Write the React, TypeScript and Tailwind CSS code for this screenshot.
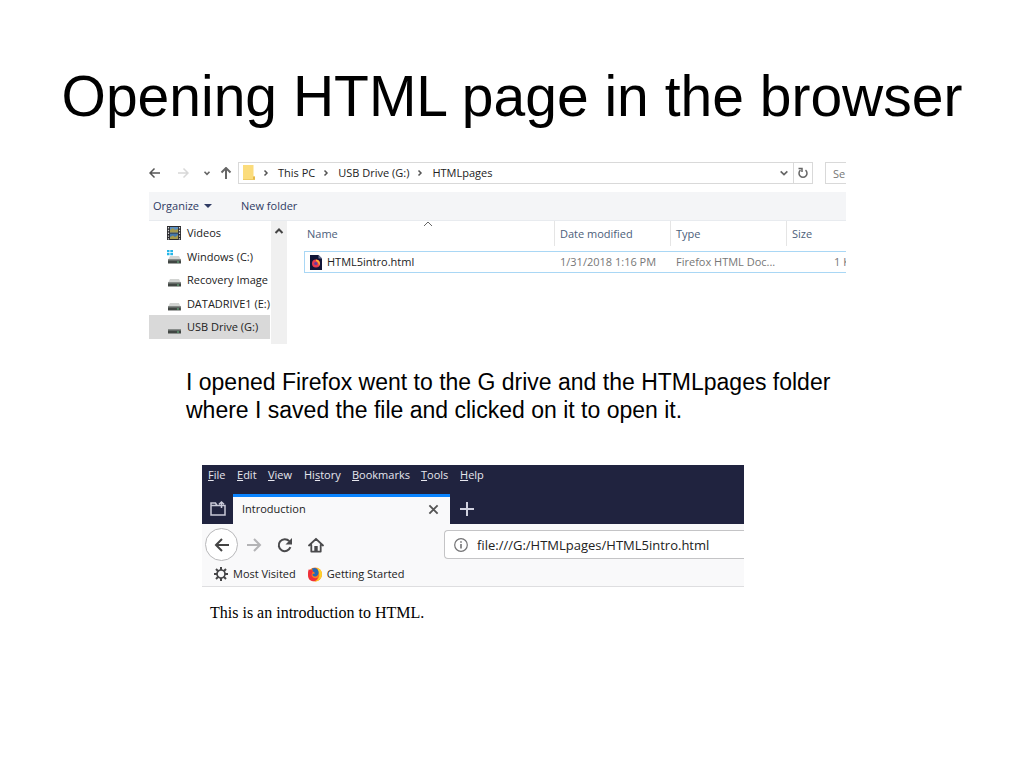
import type { ReactNode } from "react";

/* =========================
   Slide data
========================= */
type DriveKind = "video" | "windows" | "drive" | "usb";

const DRIVES: Array<{ name: string; kind: DriveKind; active?: boolean }> = [
  { name: "Videos", kind: "video" },
  { name: "Windows (C:)", kind: "windows" },
  { name: "Recovery Image", kind: "drive" },
  { name: "DATADRIVE1 (E:)", kind: "drive" },
  { name: "USB Drive (G:)", kind: "usb", active: true },
];

// `at` is the index of the underlined access key
const MENUS = [
  { label: "File", at: 0, width: "w-[29px]" },
  { label: "Edit", at: 0, width: "w-[31px]" },
  { label: "View", at: 0, width: "w-[36px]" },
  { label: "History", at: 2, width: "w-[48px]" },
  { label: "Bookmarks", at: 0, width: "w-[69px]" },
  { label: "Tools", at: 0, width: "w-[39px]" },
  { label: "Help", at: 0, width: "w-[30px]" },
];

/* =========================
   Icons
========================= */
type StrokeProps = { d: string; className?: string; box?: string; width?: number };

function Stroke({ d, className = "", box = "0 0 12 12", width = 1.5 }: StrokeProps) {
  return (
    <svg viewBox={box} className={`block shrink-0 ${className}`} fill="none" stroke="currentColor" strokeWidth={width} aria-hidden="true">
      <path d={d} />
    </svg>
  );
}

function FolderIcon() {
  return (
    <svg viewBox="0 0 14 16" className="block h-4 w-[14px] shrink-0" aria-hidden="true">
      <path d="M1 0h10.500v11.500H13V15H1z" fill="#fbdc7c" />
      <path d="M11 11.500h2V15h-2z" fill="#e5b94a" />
      <path d="M1 14.200h12v.8H1z" fill="#ecc65c" />
    </svg>
  );
}

function DriveIcon({ kind }: { kind: DriveKind }) {
  if (kind === "video") {
    return (
      <svg viewBox="0 0 14 16" className="block h-4 w-[14px]" aria-hidden="true">
        <path d="M0 1h14v14H0z" fill="#2b2b2e" />
        <path d="M3 2h8v5.500H3z" fill="#5b90c4" />
        <path d="M3 8.500h8V14H3z" fill="#4578ac" />
        <path d="M3 5l3-2 2 2 3-1v3.500H3zM3 12l3-1.500 2 1.500 3-2v4H3z" fill="#a59a4c" />
        <path d="M1.500 2v13M12.500 2v13" stroke="#dcdcdc" strokeWidth="1.200" strokeDasharray="1.400 1.400" />
      </svg>
    );
  }
  return (
    <svg viewBox="0 0 14 16" className="block h-4 w-[14px]" aria-hidden="true">
      {kind === "windows" && <path d="M0 1h2.500v2.200H0zM3.300 1H6v2.200H3.300zM0 4h2.500v2.200H0zM3.300 4H6v2.200H3.300z" fill="#25b6e8" />}
      {kind !== "usb" && <path d="M3 7h9l2 4H1z" fill="#d2d4d2" />}
      <path d="M1 10.500h13v4H1z" fill="#414643" />
      <path d="M1 10.500h13v1H1z" fill="#858b88" />
      <path d="M10 12.500h2v1h-2z" fill="#6cc08a" />
    </svg>
  );
}

function FirefoxFileIcon() {
  return (
    <svg viewBox="0 0 12 15" className="block h-[15px] w-3 shrink-0" aria-hidden="true">
      <path d="M0 0h8.500L12 3.500V15H0z" fill="#111638" />
      <path d="M8.500 0v3.500H12z" fill="#6a7395" />
      <circle cx="6" cy="8.500" r="4" fill="#e63950" />
      <path d="M6 4.500a4 4 0 0 1 2.800 6.800C9 8 8 7 6 6z" fill="#ffb52e" />
      <circle cx="5.800" cy="8.500" r="1.600" fill="#633ca0" />
    </svg>
  );
}

function FirefoxIcon() {
  return (
    <svg viewBox="0 0 16 16" className="block h-4 w-4 shrink-0" aria-hidden="true">
      <circle cx="8" cy="8.500" r="7" fill="#ff7a1c" />
      <path d="M10 1.500c4 1.500 5.800 5 4.800 8.500-1 3.400-4 5.500-7 5.500 4-2 5.500-6 3.700-9z" fill="#ffd12c" />
      <path d="M1.600 3.500C3 4 5 3.500 6 5L4.500 9c1 3.500 4 4 6.500 2.500-1.500 4-6.500 5-9 1.500C.6 10.700 1 6 1.600 3.500z" fill="#ef2f3c" />
      <path d="M5 2.500c3-1.500 6 0 6.500 3 .6 3-1.500 5.300-4 5-2-.3-2.500-2-1.500-2.800 1 .2 2-.2 2-.8L6 5.500z" fill="#2669b5" />
    </svg>
  );
}

function ReloadIcon() {
  return (
    <svg viewBox="0 0 16 16" className="block h-4 w-4" fill="none" stroke="#4a4a4c" strokeWidth="2" aria-hidden="true">
      <path d="M13.400 10.200A6 6 0 1 1 12.300 4.200" />
      <path d="M15 1v6.500H8.500z" fill="#4a4a4c" stroke="none" />
    </svg>
  );
}

function HomeIcon() {
  return (
    <svg viewBox="0 0 16 16" className="block h-4 w-4" fill="none" stroke="#4a4a4c" strokeWidth="1.800" aria-hidden="true">
      <path d="M1 8.500L8 1.800l7 6.700M3.300 8v6.600h9.400V8" strokeLinejoin="round" strokeLinecap="round" />
      <path d="M6.300 9h3.400v5.500H6.300z" fill="#4a4a4c" stroke="none" />
    </svg>
  );
}

function GearIcon() {
  return (
    <svg viewBox="0 0 14 14" className="block h-[14px] w-[14px] shrink-0" fill="none" stroke="#454547" aria-hidden="true">
      <circle cx="7" cy="7" r="4" strokeWidth="1.700" />
      <path d="M7 0v3M7 11v3M0 7h3M11 7h3M2 2l2.200 2.200M9.800 9.800L12 12M12 2L9.800 4.200M4.200 9.800L2 12" strokeWidth="2" />
    </svg>
  );
}

/* =========================
   File explorer
========================= */
function Crumb({ children }: { children: ReactNode }) {
  return (
    <li className="flex items-center">
      <Stroke d="M4.500 3.500L7 6l-2.500 2.500" className="mr-[6px] h-3 w-3 text-[#555]" />
      <a href="#path">{children}</a>
    </li>
  );
}

function Explorer() {
  return (
    <section aria-label="File explorer" className="mr-[178px] ml-[149px] overflow-hidden font-['Open_Sans','Noto_Sans',sans-serif] text-[11px] leading-4 text-[#222]">
      <div className="flex h-[22px] items-center">
        <button aria-label="Back" className="w-7 text-[#555]">
          <Stroke d="M11 6H1M5.500 1.500L1 6l4.500 4.500" className="h-3 w-3" />
        </button>
        <button aria-label="Forward" className="w-[25px] text-[#d8d8d8]">
          <Stroke d="M1 6h10M6.500 1.500L11 6l-4.500 4.500" className="h-3 w-3" />
        </button>
        <button aria-label="Recent locations" className="w-[18px] text-[#666]">
          <Stroke d="M3 4.500L6 7.500l3-3" className="h-[10px] w-[10px]" width={2} />
        </button>
        <button aria-label="Up" className="w-[18px] text-[#666]">
          <Stroke d="M6 12V1M1.500 5.500L6 1l4.500 4.500" className="h-3 w-3" width={2} />
        </button>
        <div className="flex h-[22px] min-w-0 flex-1 items-center border border-[#d9d9d9] pl-[3px]">
          <FolderIcon />
          <ol className="flex flex-1 items-center gap-[5px] pl-1">
            <Crumb>This PC</Crumb>
            <Crumb>USB Drive (G:)</Crumb>
            <Crumb>HTMLpages</Crumb>
          </ol>
          <button aria-label="Show history" className="px-1 text-[#666]">
            <Stroke d="M2 4l4 4 4-4" className="h-3 w-[10px]" width={2} />
          </button>
          <button aria-label="Refresh" className="flex h-full w-[19px] items-center justify-center border-l border-[#d9d9d9] text-[#666]">
            <Stroke d="M8.500 3.200A4 4 0 1 1 3.500 3.200M1.500 1.500h3.500v3.500" className="h-3 w-3" />
          </button>
        </div>
        <input
          aria-label="Search HTMLpages"
          placeholder="Se"
          className="ml-3 h-[22px] w-[21px] border border-r-0 border-[#d9d9d9] pl-[7px] placeholder:text-[#777]"
        />
      </div>

      <div className="mt-2 flex h-[29px] items-center gap-[29px] border-b border-[#e8ebef] bg-[#f4f5f7] pl-1 text-[#2f3b63]">
        <button className="flex items-center gap-[5px]">
          Organize
          <svg viewBox="0 0 8 4" className="h-1 w-2" fill="#2f3b63" aria-hidden="true"><path d="M0 0h8L4 4z" /></svg>
        </button>
        <button>New folder</button>
      </div>

      <div className="flex">
        <ul className="w-[121px] shrink-0">
          {DRIVES.map((d) => (
            <li key={d.name} className="h-6 even:h-[23px]">
              <button className={`flex h-full w-full items-center gap-[6px] pl-[18px] whitespace-nowrap ${d.active ? "bg-[#d9d9d9]" : ""}`}>
                <DriveIcon kind={d.kind} />
                {d.name}
              </button>
            </li>
          ))}
        </ul>
        <div className="ml-px w-4 shrink-0 bg-[#f0f0f0] pt-1">
          <button aria-label="Scroll up" className="flex w-full justify-center text-[#444]">
            <Stroke d="M2.500 8L6 4.500 9.500 8" className="h-3 w-3" width={2} />
          </button>
        </div>
        <div className="min-w-0 flex-1 pb-[71px] pl-[17px]">
          <table className="w-full table-fixed border-separate border-spacing-0 text-left">
            <colgroup>
              <col />
              <col className="w-[116px]" />
              <col className="w-[116px]" />
              <col className="w-[60px]" />
            </colgroup>
            <thead className="text-[#4c607a]">
              <tr className="h-[30px] align-top">
                <th className="relative p-0 font-normal">
                  <div className="h-[25px] pt-[5px] pl-[3px]">Name</div>
                  <Stroke d="M2 8L6 4l4 4" className="absolute -top-[3px] left-[118px] h-3 w-3 text-[#666]" width={1} />
                </th>
                <th className="p-0 font-normal"><div className="h-[25px] border-l border-[#e5e5e5] pt-[5px] pl-[5px]">Date modified</div></th>
                <th className="p-0 font-normal"><div className="h-[25px] border-l border-[#e5e5e5] pt-[5px] pl-[5px]">Type</div></th>
                <th className="p-0 font-normal"><div className="h-[25px] border-l border-[#e5e5e5] pt-[5px] pl-[5px]">Size</div></th>
              </tr>
            </thead>
            <tbody>
              <tr className="h-[22px] whitespace-nowrap text-[#777]">
                <td className="border-y border-l border-[#a9d7f5] p-0 pl-[5px] text-[#222]">
                  <a href="#file" className="flex items-center gap-[5px]"><FirefoxFileIcon />HTML5intro.html</a>
                </td>
                <td className="border-y border-[#a9d7f5] p-0 pl-[6px]">1/31/2018 1:16 PM</td>
                <td className="border-y border-[#a9d7f5] p-0 pl-[6px]">Firefox HTML Doc...</td>
                <td className="overflow-hidden border-y border-[#a9d7f5] p-0 pl-12">1 KB</td>
              </tr>
            </tbody>
          </table>
        </div>
      </div>
    </section>
  );
}

/* =========================
   Firefox window
========================= */
function Browser() {
  return (
    <section aria-label="Firefox" className="mt-[41px] mr-[280px] ml-[202px] overflow-hidden font-['Open_Sans','Noto_Sans',sans-serif] text-[11px] leading-4 text-[#222]">
      <div className="bg-[#20233f]">
        <nav className="flex h-[29px] pt-[2px] pl-[6px] font-medium text-[#e6e6ee]">
          {MENUS.map((m) => (
            <button key={m.label} className={`flex h-4 text-left ${m.width}`}>
              <span>
                {m.label.slice(0, m.at)}
                <u>{m.label[m.at]}</u>
                {m.label.slice(m.at + 1)}
              </span>
            </button>
          ))}
        </nav>
        <div className="flex h-[30px] items-center">
          <button aria-label="Show tabs" className="flex w-[31px] justify-center text-[#c8c9d8]">
            <Stroke d="M1 4.500h14V14H1zM1 5V2h4.500l1.500 2.500M11.500 7V1M9 3.200L11.500 1 14 3.200" box="0 0 16 16" className="h-4 w-4" />
          </button>
          <div className="flex h-full w-[217px] items-center justify-between border-t-[3px] border-[#0a84ff] bg-[#f9f9fa] pr-[11px] pb-[3px] pl-[9px]">
            <span>Introduction</span>
            <button aria-label="Close tab" className="text-[#555]">
              <Stroke d="M1.500 1.500l9 9M10.500 1.500l-9 9" className="h-[11px] w-[11px]" width={2} />
            </button>
          </div>
          <button aria-label="New tab" className="ml-[10px] text-[#d0d1df]">
            <Stroke d="M7 0v14M0 7h14" box="0 0 14 14" className="h-[14px] w-[14px]" width={2} />
          </button>
        </div>
      </div>

      <div className="border-b border-[#dedee0] bg-[#f9f9fa]">
        <div className="flex h-[41px] items-center pl-[3px]">
          <button aria-label="Go back" className="flex h-[33px] w-[33px] items-center justify-center rounded-full border border-[#b8b8ba] bg-white text-[#444]">
            <Stroke d="M15 8H2M8 2L2 8l6 6" box="0 0 16 16" className="h-4 w-4" width={2} />
          </button>
          <button aria-label="Go forward" className="ml-2 text-[#b4b4b6]">
            <Stroke d="M1 8h13M8 2l6 6-6 6" box="0 0 16 16" className="h-4 w-4" width={2} />
          </button>
          <button aria-label="Reload" className="ml-[15px]"><ReloadIcon /></button>
          <button aria-label="Home" className="ml-[15px]"><HomeIcon /></button>
          <div className="ml-[120px] flex h-[29px] min-w-0 flex-1 items-center gap-[9px] rounded-l-sm border border-r-0 border-[#c4c4c6] bg-white pl-[9px]">
            <svg viewBox="0 0 14 14" className="h-[14px] w-[14px] shrink-0" fill="none" stroke="#737375" aria-hidden="true">
              <circle cx="7" cy="7" r="6.300" strokeWidth="1.200" />
              <path d="M7 6v4.500M7 3.300v1.500" strokeWidth="1.600" />
            </svg>
            <input aria-label="Address" defaultValue="file:///G:/HTMLpages/HTML5intro.html" className="min-w-0 flex-1 text-[13px] outline-none" />
          </div>
        </div>
        <div className="flex h-[21px] items-center pb-[3px] pl-3">
          <a href="#most" className="flex items-center gap-[5px]"><GearIcon />Most Visited</a>
          <a href="#start" className="ml-[11px] flex items-center gap-1"><FirefoxIcon />Getting Started</a>
        </div>
      </div>

      <p className="bg-white pt-4 pb-3 pl-2 font-['Liberation_Serif',serif] text-base leading-5 text-black">
        This is an introduction to HTML.
      </p>
    </section>
  );
}

/* =========================
   Slide
========================= */
export default function App() {
  return (
    <main className="min-h-screen bg-white font-['Liberation_Sans',sans-serif] text-black">
      <h1 className="pt-16 pb-[34px] text-center text-[57px] leading-[64px]">Opening HTML page in the browser</h1>
      <Explorer />
      <p className="mt-6 mr-[180px] ml-[186px] text-[23px] leading-7">
        I opened Firefox went to the G drive and the HTMLpages folder where I saved the file and clicked on it to open it.
      </p>
      <Browser />
    </main>
  );
}
